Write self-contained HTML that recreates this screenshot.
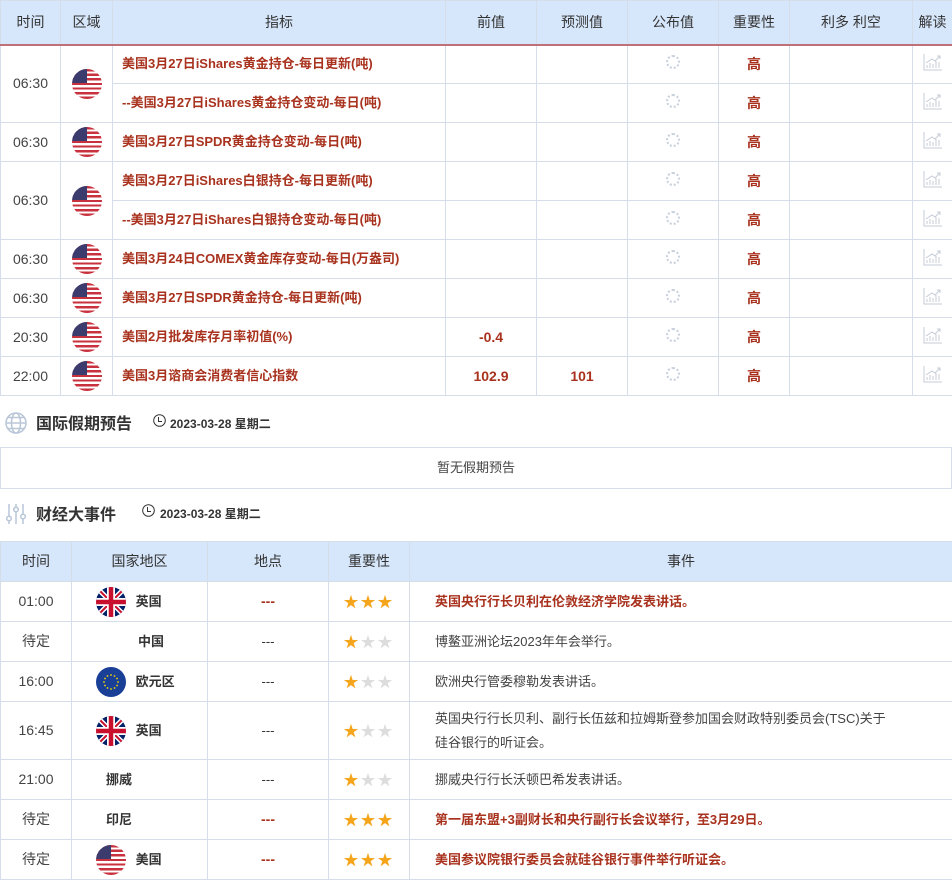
<!DOCTYPE html>
<html><head><meta charset="utf-8"><style>
*{margin:0;padding:0;box-sizing:border-box}
body{width:952px;height:881px;overflow:hidden;background:#fff;font-family:"Liberation Sans","Noto Sans CJK SC",sans-serif;color:#333;font-size:13px}
table{border-collapse:collapse;table-layout:fixed;width:952px}
td,th{border:1px solid #d5dde8;text-align:center;vertical-align:middle;padding:0;line-height:1.2}
th{background:#d7e7fb;font-weight:normal;color:#333;font-size:14px}
.t1 th{height:44px;border-bottom:2px solid #c07079}
.t1 td{height:39px}
.time{font-size:14px;color:#444}
.ind{text-align:left;padding-left:9px;color:#a8321e;font-weight:bold;font-size:13px}
.red{color:#a8321e;font-weight:bold;font-size:14px}
.us{display:inline-block;width:30px;height:30px;border-radius:50%;vertical-align:middle;position:relative;overflow:hidden;background:repeating-linear-gradient(#c8313e 0 2.3px,#fff 2.3px 4.6px)}
.us:before{content:"";position:absolute;left:0;top:0;width:15px;height:14px;background:#3c3b6e}
.spin{display:inline-block;width:14px;height:14px;border-radius:50%;border:2px dotted #c9d1dc}
.sec{position:relative}
.sec .tt{position:absolute;left:36px;font-size:16px;font-weight:bold;color:#333}
.sec .dt{position:absolute;font-size:12px;font-weight:bold;color:#333}
.box{border:1px solid #d5dde8;height:42px;text-align:center;line-height:40px;font-size:13px;color:#444}
.t2 th{height:40px}
.t2 td{height:40px}
.cn{font-weight:bold;font-size:13px;color:#333;vertical-align:middle}
.st{font-size:15px;line-height:1;letter-spacing:2px;padding-top:2px}
.st .y{color:#f5a51c}.st .g{color:#ddd}
.ev{text-align:left;padding-left:25px;font-size:13px;color:#444;line-height:24px}
.ev.r{color:#a8321e;font-weight:bold}
.flag{display:inline-block;width:30px;height:30px;border-radius:50%;vertical-align:middle;overflow:hidden}
</style></head><body>
<table class="t1">
<colgroup><col style="width:60px"><col style="width:52px"><col style="width:333px"><col style="width:91px"><col style="width:91px"><col style="width:91px"><col style="width:71px"><col style="width:123px"><col style="width:40px"></colgroup>
<tr><th>时间</th><th>区域</th><th>指标</th><th>前值</th><th>预测值</th><th>公布值</th><th>重要性</th><th>利多 利空</th><th>解读</th></tr>
<tr><td rowspan="2" class="time">06:30</td><td rowspan="2"><span class="us"></span></td><td class="ind">美国3月27日iShares黄金持仓-每日更新(吨)</td><td></td><td></td><td><span class="spin"></span></td><td class="red">高</td><td></td><td><svg width="20" height="18" viewBox="0 0 20 18" fill="none" stroke="#c5ccd6"><path d="M1 1V17H19M4 15V12M7 15V10M10 15V11M13 15V8M16 15V9M3 10L9 6L12 8L17 3M14 3H17V6"/></svg></td></tr>
<tr><td class="ind">--美国3月27日iShares黄金持仓变动-每日(吨)</td><td></td><td></td><td><span class="spin"></span></td><td class="red">高</td><td></td><td><svg width="20" height="18" viewBox="0 0 20 18" fill="none" stroke="#c5ccd6"><path d="M1 1V17H19M4 15V12M7 15V10M10 15V11M13 15V8M16 15V9M3 10L9 6L12 8L17 3M14 3H17V6"/></svg></td></tr>
<tr><td class="time">06:30</td><td><span class="us"></span></td><td class="ind">美国3月27日SPDR黄金持仓变动-每日(吨)</td><td></td><td></td><td><span class="spin"></span></td><td class="red">高</td><td></td><td><svg width="20" height="18" viewBox="0 0 20 18" fill="none" stroke="#c5ccd6"><path d="M1 1V17H19M4 15V12M7 15V10M10 15V11M13 15V8M16 15V9M3 10L9 6L12 8L17 3M14 3H17V6"/></svg></td></tr>
<tr><td rowspan="2" class="time">06:30</td><td rowspan="2"><span class="us"></span></td><td class="ind">美国3月27日iShares白银持仓-每日更新(吨)</td><td></td><td></td><td><span class="spin"></span></td><td class="red">高</td><td></td><td><svg width="20" height="18" viewBox="0 0 20 18" fill="none" stroke="#c5ccd6"><path d="M1 1V17H19M4 15V12M7 15V10M10 15V11M13 15V8M16 15V9M3 10L9 6L12 8L17 3M14 3H17V6"/></svg></td></tr>
<tr><td class="ind">--美国3月27日iShares白银持仓变动-每日(吨)</td><td></td><td></td><td><span class="spin"></span></td><td class="red">高</td><td></td><td><svg width="20" height="18" viewBox="0 0 20 18" fill="none" stroke="#c5ccd6"><path d="M1 1V17H19M4 15V12M7 15V10M10 15V11M13 15V8M16 15V9M3 10L9 6L12 8L17 3M14 3H17V6"/></svg></td></tr>
<tr><td class="time">06:30</td><td><span class="us"></span></td><td class="ind">美国3月24日COMEX黄金库存变动-每日(万盎司)</td><td></td><td></td><td><span class="spin"></span></td><td class="red">高</td><td></td><td><svg width="20" height="18" viewBox="0 0 20 18" fill="none" stroke="#c5ccd6"><path d="M1 1V17H19M4 15V12M7 15V10M10 15V11M13 15V8M16 15V9M3 10L9 6L12 8L17 3M14 3H17V6"/></svg></td></tr>
<tr><td class="time">06:30</td><td><span class="us"></span></td><td class="ind">美国3月27日SPDR黄金持仓-每日更新(吨)</td><td></td><td></td><td><span class="spin"></span></td><td class="red">高</td><td></td><td><svg width="20" height="18" viewBox="0 0 20 18" fill="none" stroke="#c5ccd6"><path d="M1 1V17H19M4 15V12M7 15V10M10 15V11M13 15V8M16 15V9M3 10L9 6L12 8L17 3M14 3H17V6"/></svg></td></tr>
<tr><td class="time">20:30</td><td><span class="us"></span></td><td class="ind">美国2月批发库存月率初值(%)</td><td class="red">-0.4</td><td></td><td><span class="spin"></span></td><td class="red">高</td><td></td><td><svg width="20" height="18" viewBox="0 0 20 18" fill="none" stroke="#c5ccd6"><path d="M1 1V17H19M4 15V12M7 15V10M10 15V11M13 15V8M16 15V9M3 10L9 6L12 8L17 3M14 3H17V6"/></svg></td></tr>
<tr><td class="time">22:00</td><td><span class="us"></span></td><td class="ind">美国3月谘商会消费者信心指数</td><td class="red">102.9</td><td class="red">101</td><td><span class="spin"></span></td><td class="red">高</td><td></td><td><svg width="20" height="18" viewBox="0 0 20 18" fill="none" stroke="#c5ccd6"><path d="M1 1V17H19M4 15V12M7 15V10M10 15V11M13 15V8M16 15V9M3 10L9 6L12 8L17 3M14 3H17V6"/></svg></td></tr>
</table>
<div class="sec" style="height:51px">
<svg style="position:absolute;left:5px;top:16px" width="22" height="22" viewBox="0 0 22 22" fill="none" stroke="#b9c6d8" stroke-width="1.5"><circle cx="11" cy="11" r="10"/><ellipse cx="11" cy="11" rx="4.5" ry="10"/><path d="M1 11H21M3 5.5H19M3 16.5H19"/></svg>
<span class="tt" style="top:14px">国际假期预告</span>
<svg style="position:absolute;left:153px;top:18px" width="13" height="13" viewBox="0 0 13 13" fill="none" stroke="#333"><circle cx="6.5" cy="6.5" r="5.8"/><path d="M5.5 3V7.5H9"/></svg>
<span class="dt" style="left:170px;top:19px">2023-03-28 星期二</span>
</div>
<div class="box">暂无假期预告</div>
<div class="sec" style="height:52px">
<svg style="position:absolute;left:5px;top:14px" width="22" height="22" viewBox="0 0 22 22" fill="none" stroke="#b9c6d8" stroke-width="1.5"><path d="M4 1V13M4 18V21M11 1V4M11 9V21M18 1V11M18 16V21"/><circle cx="4" cy="15.5" r="2.3"/><circle cx="11" cy="6.5" r="2.3"/><circle cx="18" cy="13.5" r="2.3"/></svg>
<span class="tt" style="top:12px">财经大事件</span>
<svg style="position:absolute;left:142px;top:15px" width="13" height="13" viewBox="0 0 13 13" fill="none" stroke="#333"><circle cx="6.5" cy="6.5" r="5.8"/><path d="M5.5 3V7.5H9"/></svg>
<span class="dt" style="left:160px;top:16px">2023-03-28 星期二</span>
</div>
<table class="t2">
<colgroup><col style="width:71px"><col style="width:136px"><col style="width:121px"><col style="width:81px"><col style="width:543px"></colgroup>
<tr><th>时间</th><th>国家地区</th><th>地点</th><th>重要性</th><th>事件</th></tr>
<tr><td class="time">01:00</td><td style="text-align:left;padding-left:24px"><svg class="flag" viewBox="0 0 30 30"><rect width="30" height="30" fill="#012169"/><path d="M0 0L30 30M30 0L0 30" stroke="#fff" stroke-width="5"/><path d="M0 0L30 30M30 0L0 30" stroke="#c8102e" stroke-width="2"/><path d="M15 0V30M0 15H30" stroke="#fff" stroke-width="8"/><path d="M15 0V30M0 15H30" stroke="#c8102e" stroke-width="4.5"/></svg> <span class="cn" style="margin-left:6px">英国</span></td><td class="red">---</td><td class="st"><span class="y">★★★</span></td><td class="ev r">英国央行行长贝利在伦敦经济学院发表讲话。</td></tr>
<tr><td class="time">待定</td><td style="text-align:left;padding-left:66px"><span class="cn">中国</span></td><td>---</td><td class="st"><span class="y">★</span><span class="g">★★</span></td><td class="ev">博鳌亚洲论坛2023年年会举行。</td></tr>
<tr><td class="time">16:00</td><td style="text-align:left;padding-left:24px"><svg class="flag" viewBox="0 0 30 30"><rect width="30" height="30" fill="#1a3f97"/><g fill="#f5d500"><circle cx="15" cy="8" r=".9"/><circle cx="18.5" cy="9" r=".9"/><circle cx="21" cy="11.5" r=".9"/><circle cx="22" cy="15" r=".9"/><circle cx="21" cy="18.5" r=".9"/><circle cx="18.5" cy="21" r=".9"/><circle cx="15" cy="22" r=".9"/><circle cx="11.5" cy="21" r=".9"/><circle cx="9" cy="18.5" r=".9"/><circle cx="8" cy="15" r=".9"/><circle cx="9" cy="11.5" r=".9"/><circle cx="11.5" cy="9" r=".9"/></g></svg> <span class="cn" style="margin-left:6px">欧元区</span></td><td>---</td><td class="st"><span class="y">★</span><span class="g">★★</span></td><td class="ev">欧洲央行管委穆勒发表讲话。</td></tr>
<tr><td class="time" style="height:58px">16:45</td><td style="text-align:left;padding-left:24px"><svg class="flag" viewBox="0 0 30 30"><rect width="30" height="30" fill="#012169"/><path d="M0 0L30 30M30 0L0 30" stroke="#fff" stroke-width="5"/><path d="M0 0L30 30M30 0L0 30" stroke="#c8102e" stroke-width="2"/><path d="M15 0V30M0 15H30" stroke="#fff" stroke-width="8"/><path d="M15 0V30M0 15H30" stroke="#c8102e" stroke-width="4.5"/></svg> <span class="cn" style="margin-left:6px">英国</span></td><td>---</td><td class="st"><span class="y">★</span><span class="g">★★</span></td><td class="ev">英国央行行长贝利、副行长伍兹和拉姆斯登参加国会财政特别委员会(TSC)关于<br>硅谷银行的听证会。</td></tr>
<tr><td class="time" style="height:39px">21:00</td><td style="text-align:left;padding-left:34px"><span class="cn">挪威</span></td><td>---</td><td class="st"><span class="y">★</span><span class="g">★★</span></td><td class="ev">挪威央行行长沃顿巴希发表讲话。</td></tr>
<tr><td class="time">待定</td><td style="text-align:left;padding-left:34px"><span class="cn">印尼</span></td><td class="red">---</td><td class="st"><span class="y">★★★</span></td><td class="ev r">第一届东盟+3副财长和央行副行长会议举行，至3月29日。</td></tr>
<tr><td class="time">待定</td><td style="text-align:left;padding-left:24px"><span class="us"></span> <span class="cn" style="margin-left:6px">美国</span></td><td class="red">---</td><td class="st"><span class="y">★★★</span></td><td class="ev r">美国参议院银行委员会就硅谷银行事件举行听证会。</td></tr>
</table>
</body></html>
